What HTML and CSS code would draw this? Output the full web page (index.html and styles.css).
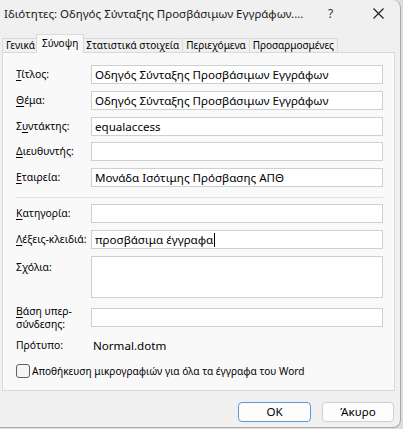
FILE: index.html
```html
<!DOCTYPE html>
<html lang="el">
<head>
<meta charset="utf-8">
<title>Ιδιότητες</title>
<link rel="stylesheet" href="styles.css">
</head>
<body>
<div class="window">
  <div class="titlebar">
    <span class="title">Ιδιότητες: Οδηγός Σύνταξης Προσβάσιμων Εγγράφων....</span>
    <span class="help">?</span>
    <span class="close"><svg width="11" height="11" viewBox="0 0 11 11"><path d="M0.5 0.5 L10.5 10.5 M10.5 0.5 L0.5 10.5" stroke="#1a1a1a" stroke-width="1.1" fill="none"/></svg></span>
  </div>
  <div class="tabs">
    <div class="tab">Γενικά</div>
    <div class="tab sel">Σύνοψη</div>
    <div class="tab">Στατιστικά στοιχεία</div>
    <div class="tab">Περιεχόμενα</div>
    <div class="tab">Προσαρμοσμένες</div>
  </div>
  <div class="panel">
    <div class="form">
      <label class="lbl"><u>Τ</u>ίτλος:</label>
      <div class="field">Οδηγός Σύνταξης Προσβάσιμων Εγγράφων</div>
      <label class="lbl"><u>Θ</u>έμα:</label>
      <div class="field">Οδηγός Σύνταξης Προσβάσιμων Εγγράφων</div>
      <label class="lbl">Σ<u>υ</u>ντάκτης:</label>
      <div class="field">equalaccess</div>
      <label class="lbl"><u>Δ</u>ιευθυντής:</label>
      <div class="field"></div>
      <label class="lbl"><u>Ε</u>ταιρεία:</label>
      <div class="field">Μονάδα Ισότιμης Πρόσβασης ΑΠΘ</div>
      <div class="sep"></div>
      <label class="lbl"><u>Κ</u>ατηγορία:</label>
      <div class="field"></div>
      <label class="lbl"><u>Λ</u>έξεις-κλειδιά:</label>
      <div class="field">προσβάσιμα έγγραφα<span class="caret"></span></div>
      <label class="lbl top">Σ<u>χ</u>όλια:</label>
      <div class="field area"></div>
      <label class="lbl two"><span class="ln"><u>Β</u>άση υπερ-</span><span class="ln">σύνδεσης:</span></label>
      <div class="field"></div>
      <div class="lbl plain">Πρότυπο:</div>
      <div class="value">Normal.dotm</div>
      <div class="check">
        <span class="box"></span>
        <span class="checktext">Αποθήκευση μικρογραφιών για όλα τα έγγραφα του Word</span>
      </div>
    </div>
  </div>
  <div class="buttons">
    <div class="btn default">OK</div>
    <div class="btn">Άκυρο</div>
  </div>
</div>
</body>
</html>
```
FILE: styles.css
```css
html, body {
  margin: 0;
  padding: 0;
}
body {
  background: #dedede;
  width: 403px;
  height: 429px;
  overflow: hidden;
  font-family: "Noto Sans", "Open Sans", sans-serif;
  font-size: 11.6px;
  color: #000;
}
.window {
  box-sizing: border-box;
  width: 401px;
  height: 428px;
  background: #f0f0f0;
  border-right: 1px solid #a9a9a9;
  border-bottom: 1px solid #a9a9a9;
  border-top-right-radius: 8px;
  border-bottom-right-radius: 8px;
  display: flex;
  flex-direction: column;
}
.titlebar {
  height: 30px;
  display: flex;
  align-items: center;
  position: relative;
  padding-bottom: 4px;
  box-sizing: border-box;
}
.title {
  margin-left: 4px;
  font-size: 11.5px;
  color: #1a1a1a;
}
.help {
  position: absolute;
  left: 328px;
  top: 5px;
  font-size: 12px;
  color: #333;
}
.close {
  position: absolute;
  left: 373px;
  top: 8px;
  line-height: 0;
}
.tabs {
  display: flex;
  align-items: flex-end;
  height: 18px;
  margin-top: 4px;
  padding-left: 2px;
  font-size: 10px;
}
.tab {
  box-sizing: border-box;
  height: 14px;
  line-height: 13px;
  padding: 0 3px;
  border: 1px solid #dadada;
  border-bottom: none;
  border-right: none;
  background: #f0f0f0;
  color: #000;
  white-space: nowrap;
}
.tab:nth-child(5) {
  border-right: 1px solid #dadada;
}
.tab.sel {
  height: 19px;
  margin-bottom: -1px;
  padding: 2px 5px 0;
  margin-left: -2px;
  margin-right: -2px;
  background: #f9f9f9;
  border-right: 1px solid #dadada;
  position: relative;
  z-index: 1;
}
.tab.sel + .tab {
  border-left: none;
  padding-left: 4px;
}
.panel {
  box-sizing: border-box;
  margin-left: 2px;
  width: 393px;
  height: 339px;
  border: 1px solid #d9d9d9;
  background: #f9f9f9;
  padding: 12px 0 0 13px;
}
.form {
  display: grid;
  grid-template-columns: 75px 292px;
  row-gap: 6.75px;
  align-items: center;
}
.lbl {
  font-size: 10.4px;
  line-height: 15px;
  white-space: nowrap;
}
.lbl u {
  text-decoration-thickness: 1px;
  text-underline-offset: 2px;
}
.lbl.top {
  align-self: start;
  padding-top: 4px;
}
.lbl.two {
  display: flex;
  flex-direction: column;
}
.lbl.two .ln {
  display: block;
  line-height: 14px;
  height: 13px;
}
.field {
  box-sizing: border-box;
  height: 19px;
  border: 1px solid #cfcfcf;
  background: #fff;
  padding: 0 3px;
  line-height: 17px;
  white-space: nowrap;
  overflow: hidden;
}
.field.area {
  height: 42px;
}
.caret {
  display: inline-block;
  width: 1px;
  height: 14px;
  background: #000;
  vertical-align: -3px;
  margin-left: 1px;
}
.sep {
  grid-column: 1 / -1;
  height: 1px;
  background: #e2e2e2;
  margin: 3.25px 0 -0.75px;
}
.plain {
  margin-top: 1px;
}
.value {
  margin-top: 1px;
  padding-left: 2px;
  line-height: 15px;
}
.check {
  grid-column: 1 / -1;
  display: flex;
  align-items: center;
  gap: 2px;
  margin-top: 4.5px;
  white-space: nowrap;
}
.checktext {
  font-size: 10.1px;
}
.box {
  box-sizing: border-box;
  width: 14px;
  height: 14px;
  border: 1px solid #5f5f5f;
  border-radius: 3px;
  background: #f5f5f5;
}
.buttons {
  display: flex;
  justify-content: flex-end;
  gap: 11px;
  padding-right: 6px;
  margin-top: 11px;
}
.btn {
  box-sizing: border-box;
  width: 72px;
  height: 20px;
  border: 1px solid #d0d0d0;
  border-radius: 4px;
  background: #fdfdfd;
  text-align: center;
  line-height: 18px;
}
.btn.default {
  width: 73px;
  border-color: #5b9bd5;
}
```
